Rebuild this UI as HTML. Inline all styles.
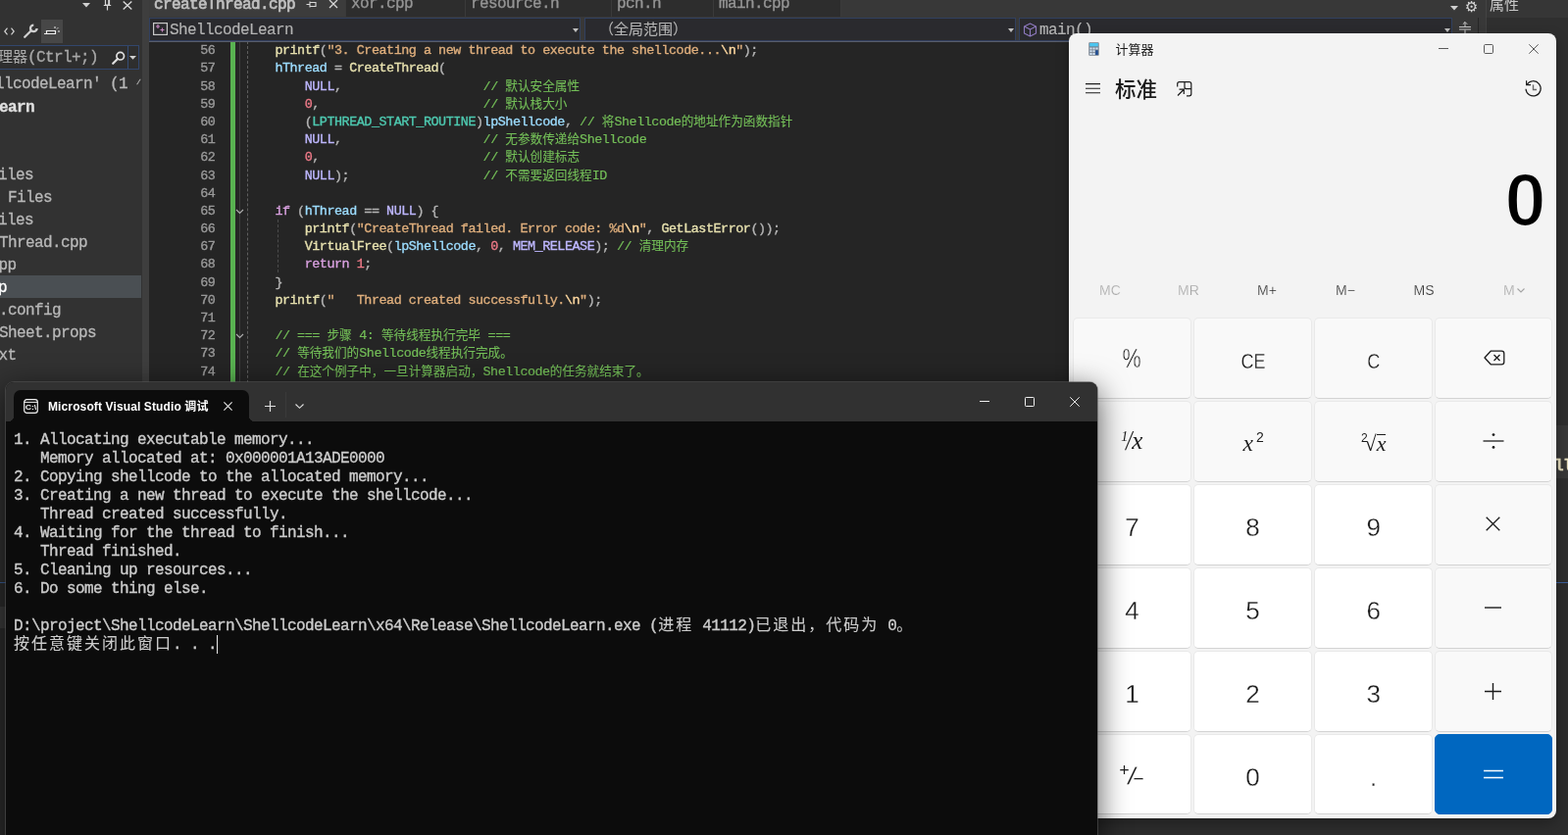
<!DOCTYPE html>
<html lang="zh-CN"><head><meta charset="utf-8"><title>ShellcodeLearn</title>
<style>
html,body{margin:0;padding:0}
body{width:1599px;height:852px;overflow:hidden;position:relative;background:#2b2b2b;
 font-family:"Liberation Sans","Noto Sans CJK SC",sans-serif;-webkit-font-smoothing:antialiased}
div,span{box-sizing:border-box}
.abs{position:absolute}
.mono{font-family:"Liberation Mono","Noto Sans CJK SC",monospace;white-space:pre;-webkit-text-stroke:.35px}
svg{position:absolute;overflow:visible}
#vs,#calc,#term{will-change:transform}
/* ---- visual studio ---- */
#vs{position:absolute;left:0;top:0;width:1599px;height:852px;background:#2b2b2b;overflow:hidden}
#side{position:absolute;left:0;top:0;width:145px;height:852px;background:#323232;overflow:hidden}
#split{position:absolute;left:145px;top:0;width:6.5px;height:852px;background:#3e3e3e}
.ui{font-family:"Liberation Mono","Noto Sans CJK SC",monospace;font-size:16px;letter-spacing:-.6px;white-space:pre;color:#c8c8c8;-webkit-text-stroke:.3px;position:absolute;line-height:23px;height:23px}
#search{position:absolute;left:-10px;top:46px;width:152px;height:25px;border:1px solid #32466c;background:#2e2e2e}
#search i{position:absolute;left:139px;top:0;width:1px;height:23px;background:#364d75}
#selrow{position:absolute;left:0;top:281px;width:144px;height:23px;background:#4a4f53}
#tabbar{position:absolute;left:152px;top:0;width:1447px;height:18px;background:#383838}
.tab{position:absolute;top:0;height:17px;background:#2d2d2d;border-right:1px solid #3a3a3a}
.tab.on{background:#3c3c3c}
.tab span{position:absolute;left:5px;top:-6.3px;line-height:23px;font-size:16px;letter-spacing:-.6px;color:#959595;margin-top:-1px}
.tab.on span{color:#c0c0c0;-webkit-text-stroke:.7px;margin-top:0}
#nav{position:absolute;left:152px;top:18px;width:1355px;height:24px;background:#383838}
.cb{position:absolute;top:0;height:23.5px;border:1px solid #31405f;background:#2a2a2e}
.cb b{position:absolute;right:1.5px;top:10px;width:0;height:0;border-left:3.5px solid transparent;border-right:3.5px solid transparent;border-top:4px solid #c0c0c0}
#editor{position:absolute;left:151.5px;top:42px;width:1355.5px;height:810px;background:#252525;overflow:hidden}
#editor>*{margin-left:.5px}
.ln{position:absolute;left:0;width:67.4px;text-align:right;color:#999;font-size:13.4px;letter-spacing:-.458px;height:18.15px;line-height:18.15px}
.cl{position:absolute;left:128.4px;color:#b4b4b4;font-size:13.4px;letter-spacing:-.458px;height:18.15px;line-height:18.15px}
.f{color:#e6e0ae}.s{color:#deae7c}.e{color:#ffd9a0}.v{color:#9cdcfe}.m{color:#beb7ff}.n{color:#ee7a88}.t{color:#4ec9b0}.k{color:#d8a0df}.c{color:#74bf58;-webkit-text-stroke:.2px}
.ui .z{font-size:15px;letter-spacing:0;-webkit-text-stroke:.1px}
.cl .z{font-size:12.64px;letter-spacing:0;-webkit-text-stroke:.1px}.p{color:#b4b4b4}.w{color:#dcdcdc}
/* ---- calculator ---- */
#calc{position:absolute;left:1090px;top:34px;width:497px;height:801px;background:#f3f3f3;border-radius:8px;overflow:hidden;color:#1b1b1b;box-shadow:0 5px 14px rgba(0,0,0,.3)}
.btn{position:absolute;width:121.2px;height:83.2px;border-radius:5px;background:#f9f9f9;border:1px solid #e9e9e9;border-bottom-color:#d3d3d3;
 text-align:center;font-size:26px;line-height:86px;color:#1c1c1c}
.btn{-webkit-text-stroke:.3px #f9f9f9}
.btn.d{background:#ffffff;-webkit-text-stroke:.3px #fff}
.btn.eq{background:#0067c0;border-color:#0067c0;color:#fff}
.mem{position:absolute;top:-2px;font-size:14px;-webkit-text-stroke:.25px #f3f3f3;width:60px;text-align:center;line-height:20px;color:#1c1c1c}
.mem.off{color:#a3a3a3}
/* ---- terminal ---- */
#term{position:absolute;left:6px;top:390px;width:1113px;height:480px;background:#0c0c0c;border-radius:8px;overflow:hidden;
 box-shadow:0 0 0 1px rgba(90,90,90,.55)}
#termshadow{position:absolute;left:6px;top:390px;width:1113px;height:480px;border-radius:8px;box-shadow:0 8px 30px 2px rgba(0,0,0,.62)}
#tbar{position:absolute;left:0;top:0;width:1113px;height:40px;background:#313131}
#ttab{position:absolute;left:8px;top:8px;width:240px;height:32px;background:#0c0c0c;border-radius:7px 7px 0 0}
#ttab:before,#ttab:after{content:"";position:absolute;bottom:0;width:6px;height:6px;background:radial-gradient(circle at 0 0,rgba(12,12,12,0) 6px,#0c0c0c 6.5px)}
#ttab:before{left:-6px}
#ttab:after{right:-6px;background:radial-gradient(circle at 100% 0,rgba(12,12,12,0) 6px,#0c0c0c 6.5px)}
#ttitle{position:absolute;left:43px;top:16px;font-size:12px;line-height:18px;font-weight:bold;color:#fff;white-space:pre;letter-spacing:.12px}
.tl{position:absolute;left:8px;color:#cccccc;font-size:16px;letter-spacing:-.6px;height:19.05px;line-height:19.05px}
.tl .z{font-family:"Liberation Mono","Noto Sans CJK SC",monospace;font-size:16px;letter-spacing:2px;line-height:0;position:relative;top:-0.5px;-webkit-text-stroke:.1px}
</style></head><body>
<div id="vs">
<div id="side">
 <svg style="left:84px;top:3px" width="8" height="5" viewBox="0 0 8 5"><path d="M0 0H8L4 4.5Z" fill="#d0d0d0"/></svg>
 <svg style="left:105px;top:-2px" width="9" height="13" viewBox="0 0 9 13"><path d="M2.5 0V7H6.5V0M0.8 7.5H8.2M4.5 7.5V12.5" fill="none" stroke="#d8d8d8" stroke-width="1.2"/><path d="M5.2 0H6.6V7H5.2Z" fill="#d8d8d8"/></svg>
 <svg style="left:125px;top:1px" width="10" height="9" viewBox="0 0 10 9"><path d="M0.7 0.5L9.3 8.5M9.3 0.5L0.7 8.5" fill="none" stroke="#d8d8d8" stroke-width="1.4"/></svg>
 <svg style="left:4px;top:28px" width="11" height="8" viewBox="0 0 11 8"><path d="M3.5 0.7L0.8 4L3.5 7.3M7.5 0.7L10.2 4L7.5 7.3" fill="none" stroke="#d0d0d0" stroke-width="1.2"/></svg>
 <svg style="left:23px;top:24px" width="16" height="16" viewBox="0 0 16 16"><path d="M2.2 13.8L8.8 7.2" stroke="#cfcfcf" stroke-width="2.3" stroke-linecap="round" fill="none"/><path d="M14.6 4.9A3.3 3.3 0 1 1 11.3 1.6" fill="none" stroke="#cfcfcf" stroke-width="2.3"/></svg>
 <div class="abs" style="left:42px;top:20px;width:22px;height:24px;background:#474747"></div>
 <svg style="left:45px;top:26px" width="17" height="10" viewBox="0 0 17 10"><path d="M0 8.5H12M2.5 8.5V5.5H11.5V8.5" fill="none" stroke="#f0f0f0" stroke-width="1.2"/><path d="M11 1V3M13 3.5L14.2 2.3M14 6H16" stroke="#f0f0f0" stroke-width="1" fill="none"/></svg>
 <div id="search"><i></i></div>
 <div class="ui" style="left:-2px;top:48px;color:#a8a8a8"><span class="z">理器</span>(Ctrl+;)</div>
 <svg style="left:114px;top:52px" width="14" height="14" viewBox="0 0 14 14"><circle cx="8.7" cy="5.2" r="3.8" fill="none" stroke="#e0e0e0" stroke-width="1.7"/><path d="M6 8L1.2 12.8" stroke="#e0e0e0" stroke-width="2.2" stroke-linecap="round"/></svg>
 <svg style="left:132px;top:57px" width="7" height="4" viewBox="0 0 7 4"><path d="M0 0H7L3.5 3.8Z" fill="#d0d0d0"/></svg>
 <div id="selrow"></div>
 <div class="ui" style="left:139px;top:72px;font-size:8px;color:#b0b0b0">/</div>
<div class="ui" style="left:-5px;top:74.7px;color:#b8b8b8;">llcodeLearn&#x27; (1 </div>
<div class="ui" style="left:-1px;top:99.1px;color:#e0e0e0;font-weight:bold;">earn</div>
<div class="ui" style="left:-2px;top:168.4px;color:#b8b8b8;">iles</div>
<div class="ui" style="left:-1px;top:191.4px;color:#b8b8b8;"> Files</div>
<div class="ui" style="left:-2px;top:214.4px;color:#b8b8b8;">iles</div>
<div class="ui" style="left:-10px;top:237.4px;color:#b8b8b8;">eThread.cpp</div>
<div class="ui" style="left:-1.5px;top:260.4px;color:#b8b8b8;">pp</div>
<div class="ui" style="left:-2px;top:283.4px;color:#ffffff;">p</div>
<div class="ui" style="left:-1px;top:306.4px;color:#b8b8b8;">.config</div>
<div class="ui" style="left:-1px;top:329.4px;color:#b8b8b8;">Sheet.props</div>
<div class="ui" style="left:-1.5px;top:352.4px;color:#b8b8b8;">xt</div>
</div>
<div id="split"></div>
<div id="tabbar">
<div class="tab on" style="left:0px;width:201px"><span class="mono">createThread.cpp</span><svg style="left:160px;top:-1px" width="12" height="10" viewBox="0 0 12 10"><path d="M0.5 5.5H4M4 2.5V8.5M4 3.5H10V7.5H4" fill="none" stroke="#d8d8d8" stroke-width="1.1"/></svg><svg style="left:183px;top:-1px" width="10" height="10" viewBox="0 0 10 10"><path d="M1 1L9 9M9 1L1 9" fill="none" stroke="#d8d8d8" stroke-width="1.3"/></svg></div>
<div class="tab" style="left:201px;width:122px"><span class="mono">xor.cpp</span></div>
<div class="tab" style="left:323px;width:149px"><span class="mono">resource.h</span></div>
<div class="tab" style="left:472px;width:104px"><span class="mono">pch.h</span></div>
<div class="tab" style="left:576px;width:130px"><span class="mono">main.cpp</span></div>
 <svg style="left:1327px;top:6px" width="8" height="5" viewBox="0 0 8 5"><path d="M0 0H8L4 4.5Z" fill="#d0d0d0"/></svg>
 <div class="abs" style="left:1342px;top:-5px;font-size:15px;line-height:23px;color:#d8d8d8;font-family:'Liberation Sans','DejaVu Sans',sans-serif">⚙</div>
 <div class="abs" style="left:1362.5px;top:0;width:85px;height:18px;background:#363636;border-left:1px solid #444"></div>
 <div class="abs" style="left:1367px;top:-7.3px;font-size:15px;line-height:23px;color:#c8c8c8;font-family:'Liberation Sans','Noto Sans CJK SC',sans-serif">属性</div>
</div>
<div id="nav">
 <div class="cb" style="left:0;width:440px"><b></b>
  <svg style="left:3px;top:4px" width="15" height="13" viewBox="0 0 15 13"><rect x="0.6" y="0.6" width="13.8" height="11.8" fill="none" stroke="#c8c8c8" stroke-width="1.2"/><path d="M3 4H7M5 2V6M7.5 7.5H11.5M9.5 5.5V9.5" stroke="#c586c0" stroke-width="1.2" fill="none"/></svg>
  <div class="ui" style="left:20px;top:1.5px;line-height:21px;height:21px;color:#b4b4b4;-webkit-text-stroke:.15px">ShellcodeLearn</div></div>
 <div class="cb" style="left:444px;width:440px"><b></b>
  <div class="ui" style="left:14px;top:1.5px;line-height:21px;height:21px;color:#b4b4b4;-webkit-text-stroke:.15px"><span class="z">（全局范围）</span></div></div>
 <div class="cb" style="left:887px;width:442px"><b></b>
  <svg style="left:3px;top:3.5px" width="15" height="15" viewBox="0 0 15 15"><path d="M7.5 1L13.5 4V11L7.5 14L1.5 11V4ZM1.5 4L7.5 7L13.5 4M7.5 7V14" fill="none" stroke="#8f7abf" stroke-width="1.1" stroke-linejoin="round"/></svg>
  <div class="ui" style="left:20px;top:1.5px;line-height:21px;height:21px;color:#b4b4b4;-webkit-text-stroke:.15px">main()</div></div>
 <svg style="left:1335.5px;top:3.5px" width="12" height="18" viewBox="0 0 12 18"><path d="M0 5.5H12M0 8H12M6 0.5V5M6 8.5V13M3.8 2.7L6 0.5L8.2 2.7" fill="none" stroke="#c8c8c8" stroke-width="1"/></svg>
</div>
<div id="editor">
 <div class="abs" style="left:83.2px;top:0;width:4.6px;height:810px;background:#59b251"></div>
 <div class="abs" style="left:91.5px;top:0;width:1px;height:810px;background:#3c3c3c"></div>
 <div class="abs" style="left:100px;top:0;width:0;height:810px;border-left:1px dashed #5e5e5e"></div>
 <div class="abs" style="left:131px;top:182px;width:0;height:54px;border-left:1px dashed #4c4c4c"></div>
 <svg style="left:88px;top:170.5px" width="9" height="6" viewBox="0 0 9 6"><path d="M1 1L4.5 4.5L8 1" fill="none" stroke="#b0b0b0" stroke-width="1.1"/></svg>
 <svg style="left:88px;top:297.5px" width="9" height="6" viewBox="0 0 9 6"><path d="M1 1L4.5 4.5L8 1" fill="none" stroke="#b0b0b0" stroke-width="1.1"/></svg>
<div class="ln mono" style="top:1.30px">56</div>
<div class="cl mono" style="top:1.30px"><span class="f">printf</span><span class="p">(</span><span class="s">&quot;3. Creating a new thread to execute the shellcode...</span><span class="e">\n</span><span class="s">&quot;</span><span class="p">);</span></div>
<div class="ln mono" style="top:19.48px">57</div>
<div class="cl mono" style="top:19.48px"><span class="v">hThread</span><span class="p"> = </span><span class="f">CreateThread</span><span class="p">(</span></div>
<div class="ln mono" style="top:37.66px">58</div>
<div class="cl mono" style="top:37.66px">    <span class="m">NULL</span><span class="p">,</span>                   <span class="c">// <span class="z">默认安全属性</span></span></div>
<div class="ln mono" style="top:55.84px">59</div>
<div class="cl mono" style="top:55.84px">    <span class="n">0</span><span class="p">,</span>                      <span class="c">// <span class="z">默认栈大小</span></span></div>
<div class="ln mono" style="top:74.02px">60</div>
<div class="cl mono" style="top:74.02px">    <span class="p">(</span><span class="t">LPTHREAD_START_ROUTINE</span><span class="p">)</span><span class="v">lpShellcode</span><span class="p">, </span><span class="c">// <span class="z">将</span>Shellcode<span class="z">的地址作为函数指针</span></span></div>
<div class="ln mono" style="top:92.20px">61</div>
<div class="cl mono" style="top:92.20px">    <span class="m">NULL</span><span class="p">,</span>                   <span class="c">// <span class="z">无参数传递给</span>Shellcode</span></div>
<div class="ln mono" style="top:110.38px">62</div>
<div class="cl mono" style="top:110.38px">    <span class="n">0</span><span class="p">,</span>                      <span class="c">// <span class="z">默认创建标志</span></span></div>
<div class="ln mono" style="top:128.56px">63</div>
<div class="cl mono" style="top:128.56px">    <span class="m">NULL</span><span class="p">);</span>                  <span class="c">// <span class="z">不需要返回线程</span>ID</span></div>
<div class="ln mono" style="top:146.74px">64</div>
<div class="ln mono" style="top:164.92px">65</div>
<div class="cl mono" style="top:164.92px"><span class="k">if</span><span class="p"> (</span><span class="v">hThread</span><span class="p"> == </span><span class="m">NULL</span><span class="p">) {</span></div>
<div class="ln mono" style="top:183.10px">66</div>
<div class="cl mono" style="top:183.10px">    <span class="f">printf</span><span class="p">(</span><span class="s">&quot;CreateThread failed. Error code: %d</span><span class="e">\n</span><span class="s">&quot;</span><span class="p">, </span><span class="f">GetLastError</span><span class="p">());</span></div>
<div class="ln mono" style="top:201.28px">67</div>
<div class="cl mono" style="top:201.28px">    <span class="f">VirtualFree</span><span class="p">(</span><span class="v">lpShellcode</span><span class="p">, </span><span class="n">0</span><span class="p">, </span><span class="m">MEM_RELEASE</span><span class="p">); </span><span class="c">// <span class="z">清理内存</span></span></div>
<div class="ln mono" style="top:219.46px">68</div>
<div class="cl mono" style="top:219.46px">    <span class="k">return</span> <span class="n">1</span><span class="p">;</span></div>
<div class="ln mono" style="top:237.64px">69</div>
<div class="cl mono" style="top:237.64px"><span class="p">}</span></div>
<div class="ln mono" style="top:255.82px">70</div>
<div class="cl mono" style="top:255.82px"><span class="f">printf</span><span class="p">(</span><span class="s">&quot;   Thread created successfully.</span><span class="e">\n</span><span class="s">&quot;</span><span class="p">);</span></div>
<div class="ln mono" style="top:274.00px">71</div>
<div class="ln mono" style="top:292.18px">72</div>
<div class="cl mono" style="top:292.18px"><span class="c">// === <span class="z">步骤</span> 4: <span class="z">等待线程执行完毕</span> ===</span></div>
<div class="ln mono" style="top:310.36px">73</div>
<div class="cl mono" style="top:310.36px"><span class="c">// <span class="z">等待我们的</span>Shellcode<span class="z">线程执行完成。</span></span></div>
<div class="ln mono" style="top:328.54px">74</div>
<div class="cl mono" style="top:328.54px"><span class="c">// <span class="z">在这个例子中，一旦计算器启动，</span>Shellcode<span class="z">的任务就结束了。</span></span></div>
</div>
<div class="abs" style="left:152px;top:40.6px;width:1329px;height:2.5px;background:linear-gradient(#33405f 0,#33405f 30%,#585d6a 36%,#585d6a 100%)"></div>
<div class="abs" style="left:1507px;top:18px;width:92px;height:834px;background:#383838"></div>
<div class="abs" style="left:1514.5px;top:18px;width:85px;height:834px;background:#2f2f2f;border-left:1px solid #404040"></div>
<div class="abs" style="left:1507px;top:18px;width:1px;height:24px;background:#262626"></div>
<div class="abs" style="left:1587px;top:434px;width:12px;height:54px;background:#383838"></div>
<div class="ui" style="left:1585px;top:465px;color:#e8e0c0;font-weight:bold">ll</div>
<div class="abs" style="left:0;top:594px;width:1599px;height:258px;background:#2d2d2d;border-top:1px solid #3b5f9a"></div>
<div class="abs" style="left:0;top:619px;width:6px;height:22px;background:#3d3d3d"></div>
</div>

<div id="calc">
 <svg style="left:20.2px;top:9px" width="11" height="14" viewBox="0 0 11 14"><rect x="0.3" y="0.2" width="10.4" height="13.6" rx="0.8" fill="#727d8a"/><rect x="1.2" y="1" width="8.6" height="3.4" fill="#4cc6f0"/><path d="M1.4 5.6H3.6V7.5H1.4ZM4.4 5.6H6.6V7.5H4.4ZM7.4 5.6H9.6V7.5H7.4ZM1.4 8.3H3.6V10.2H1.4ZM4.4 8.3H6.6V10.2H4.4ZM1.4 11H3.6V12.9H1.4ZM4.4 11H6.6V12.9H4.4Z" fill="#d3e3f4"/><rect x="7.3" y="8.3" width="2.4" height="4.7" fill="#1b4a94"/></svg>
 <div class="abs" style="left:47.5px;top:7px;font-size:13px;line-height:20px;color:#1b1b1b">计算器</div>
 <svg style="left:377px;top:15px" width="10" height="1" viewBox="0 0 10 1"><path d="M0 0.5H10" stroke="#5a5a5a" stroke-width="1"/></svg>
 <svg style="left:423px;top:10.5px" width="10" height="10" viewBox="0 0 10 10"><rect x="0.5" y="0.5" width="9" height="9" rx="1.2" fill="none" stroke="#5a5a5a" stroke-width="1"/></svg>
 <svg style="left:469px;top:10.5px" width="10" height="10" viewBox="0 0 10 10"><path d="M0.3 0.3L9.7 9.7M9.7 0.3L0.3 9.7" stroke="#5a5a5a" stroke-width="1"/></svg>
 <svg style="left:16.6px;top:51px" width="15" height="11" viewBox="0 0 15 11"><path d="M0 0.6H15M0 5.2H15M0 9.8H15" stroke="#1c1c1c" stroke-width="1.1"/></svg>
 <div class="abs" style="left:47px;top:43px;font-size:21.5px;line-height:30px;font-weight:500;color:#1b1b1b">标准</div>
 <svg style="left:110px;top:48.5px" width="16" height="16" viewBox="0 0 16 16"><path d="M0.7 5.5V2.7Q0.7 0.7 2.7 0.7H12.8Q14.8 0.7 14.8 2.7V12.8Q14.8 14.8 12.8 14.8H10M8 0.7V5.7Q8 7.7 10 7.7H14.8M1 14.5L7 8.5M2.5 8.2H7.3V13" fill="none" stroke="#1c1c1c" stroke-width="1.2"/></svg>
 <svg style="left:464px;top:46.5px" width="19" height="19" viewBox="0 0 19 19"><path d="M3.2 5.2A7.6 7.6 0 1 1 2 9.8" fill="none" stroke="#1c1c1c" stroke-width="1.2"/><path d="M2.6 1.2V5.6H7" fill="none" stroke="#1c1c1c" stroke-width="1.2"/><path d="M9.5 5.5V10.5H13" fill="none" stroke="#6a6a6a" stroke-width="1.4"/></svg>
 <div class="abs" style="left:378.4px;top:127.5px;width:108px;text-align:right;font-size:75.5px;line-height:84px;font-weight:bold;color:#000;-webkit-text-stroke:2px #f3f3f3">0</div>
<div class="mem off" style="left:12.0px;top:252.0px">MC</div>
<div class="mem off" style="left:92.0px;top:252.0px">MR</div>
<div class="mem" style="left:172.0px;top:252.0px">M+</div>
<div class="mem" style="left:252.0px;top:252.0px">M−</div>
<div class="mem" style="left:332.0px;top:252.0px">MS</div>
<div class="mem off" style="left:443.0px;top:252.0px;width:24px;text-align:left">M<svg style="left:14px;top:8px" width="8" height="5" viewBox="0 0 8 5"><path d="M0.5 0.5L4 4L7.5 0.5" fill="none" stroke="#a3a3a3" stroke-width="1.1"/></svg></div>
<div class="btn" style="left:3.8px;top:290.1px"><span style="display:inline-block;font-size:27px;transform:scaleX(.8);position:relative;top:-2px;-webkit-text-stroke:.45px #f9f9f9">%</span></div>
<div class="btn" style="left:127.0px;top:290.1px"><span style="display:inline-block;font-size:21.5px;transform:scaleX(.84);position:relative;top:-1px">CE</span></div>
<div class="btn" style="left:250.1px;top:290.1px"><span style="display:inline-block;font-size:21.5px;transform:scaleX(.84);position:relative;top:-1px">C</span></div>
<div class="btn" style="left:373.2px;top:290.1px;width:120.2px"><svg style="left:48.5px;top:31.8px" width="22" height="16" viewBox="0 0 22 16"><path d="M7.2 1.2H18.2Q20.8 1.2 20.8 3.8V12.2Q20.8 14.8 18.2 14.8H7.2L1 8Z" fill="none" stroke="#1c1c1c" stroke-width="1.3" stroke-linejoin="round"/><path d="M10.5 5L16.5 11M16.5 5L10.5 11" stroke="#1c1c1c" stroke-width="1.3" fill="none"/></svg></div>
<div class="btn" style="left:3.8px;top:375.1px"><span style="font-family:'Liberation Serif',serif;font-size:25px;position:relative;top:-4.5px;left:-1px;-webkit-text-stroke:0"><i style="font-size:14px;position:relative;top:-8px;left:2px">1</i><span style="display:inline-block;transform:scaleY(1.15) skewX(-8deg)">/</span><i style="margin-left:-1px">x</i></span></div>
<div class="btn" style="left:127.0px;top:375.1px"><span style="font-family:'Liberation Serif',serif;font-size:23.5px;position:relative;top:-2px;left:-1px;-webkit-text-stroke:0"><i>x</i><span style="font-family:'Liberation Sans',sans-serif;font-size:14px;position:relative;top:-9px;left:3px">2</span></span></div>
<div class="btn" style="left:250.1px;top:375.1px"><span style="font-family:'Liberation Serif',serif;font-size:22px;position:relative;top:-2.5px;left:-1.5px;-webkit-text-stroke:0"><span style="font-family:'Liberation Sans',sans-serif;font-size:12px;position:relative;top:-9px;left:3px">2</span>√<i style="border-top:1.3px solid #1c1c1c;line-height:18px;display:inline-block;height:18px;position:relative;top:0.5px">x</i></span></div>
<div class="btn" style="left:373.2px;top:375.1px;width:120.2px"><svg style="left:47.5px;top:30.6px" width="22" height="18" viewBox="0 0 22 18"><path d="M0.5 9H21.5" stroke="#1c1c1c" stroke-width="1.3"/><circle cx="11" cy="2.6" r="1.4" fill="#1c1c1c"/><circle cx="11" cy="15.4" r="1.4" fill="#1c1c1c"/></svg></div>
<div class="btn d" style="left:3.8px;top:460.0px">7</div>
<div class="btn d" style="left:127.0px;top:460.0px">8</div>
<div class="btn d" style="left:250.1px;top:460.0px">9</div>
<div class="btn" style="left:373.2px;top:460.0px;width:120.2px"><svg style="left:50.5px;top:32.2px" width="15" height="15" viewBox="0 0 15 15"><path d="M0.7 0.7L14.3 14.3M14.3 0.7L0.7 14.3" stroke="#1c1c1c" stroke-width="1.3"/></svg></div>
<div class="btn d" style="left:3.8px;top:544.9px">4</div>
<div class="btn d" style="left:127.0px;top:544.9px">5</div>
<div class="btn d" style="left:250.1px;top:544.9px">6</div>
<div class="btn" style="left:373.2px;top:544.9px;width:120.2px"><svg style="left:50px;top:39.5px" width="17" height="2" viewBox="0 0 17 2"><path d="M0 1H17" stroke="#1c1c1c" stroke-width="1.4"/></svg></div>
<div class="btn d" style="left:3.8px;top:629.9px">1</div>
<div class="btn d" style="left:127.0px;top:629.9px">2</div>
<div class="btn d" style="left:250.1px;top:629.9px">3</div>
<div class="btn" style="left:373.2px;top:629.9px;width:120.2px"><svg style="left:49.5px;top:32px" width="17" height="17" viewBox="0 0 17 17"><path d="M0 8.5H17M8.5 0V17" stroke="#1c1c1c" stroke-width="1.4"/></svg></div>
<div class="btn d" style="left:3.8px;top:714.8px;height:82px"><span style="font-size:24px;position:relative;top:-1.5px;left:0px;-webkit-text-stroke:.1px #fff"><span style="position:relative;top:-8.5px;left:1px;font-size:18px">+</span><span style="display:inline-block;transform:skewX(-12deg)">/</span><span style="position:relative;top:0.5px;left:-2px;font-size:19px">−</span></span></div>
<div class="btn d" style="left:127.0px;top:714.8px;height:82px">0</div>
<div class="btn d" style="left:250.1px;top:714.8px;height:82px">.</div>
<div class="btn eq" style="left:373.2px;top:714.8px;height:82px;width:120.2px"><svg style="left:49px;top:35.7px" width="20" height="10" viewBox="0 0 20 10"><path d="M0 1.5H20M0 8.5H20" stroke="#fff" stroke-width="1.6"/></svg></div>
</div>

<div id="termshadow"></div>
<div id="term">
 <div id="tbar">
  <div id="ttab">
   <svg style="left:10px;top:9px" width="15" height="15" viewBox="0 0 15 15"><rect x="0.7" y="0.7" width="13.6" height="13.6" rx="2.6" fill="none" stroke="#f0f0f0" stroke-width="1.2"/><path d="M0.7 3.4H14.3" stroke="#f0f0f0" stroke-width="1"/><text x="1.7" y="11.4" font-family="Liberation Sans,sans-serif" font-size="7" font-weight="bold" fill="#f0f0f0" textLength="11.6" lengthAdjust="spacingAndGlyphs">C:\</text></svg>
   <svg style="left:214px;top:11.5px" width="9" height="9" viewBox="0 0 9 9"><path d="M0.4 0.4L8.6 8.6M8.6 0.4L0.4 8.6" stroke="#e8e8e8" stroke-width="1.1"/></svg>
  </div>
  <div id="ttitle">Microsoft Visual Studio <span style="font-family:'Liberation Sans','Noto Sans CJK SC',sans-serif">调试</span></div>
  <svg style="left:264px;top:19px" width="11" height="11" viewBox="0 0 11 11"><path d="M0 5.5H11M5.5 0V11" stroke="#e0e0e0" stroke-width="1.2"/></svg>
  <div class="abs" style="left:285px;top:10px;width:1px;height:26px;background:#3a3a3a"></div>
  <svg style="left:295px;top:22px" width="9" height="5" viewBox="0 0 9 5"><path d="M0.5 0.5L4.5 4.3L8.5 0.5" fill="none" stroke="#e0e0e0" stroke-width="1.1"/></svg>
  <svg style="left:993px;top:19.2px" width="10" height="1" viewBox="0 0 10 1"><path d="M0 0.5H10" stroke="#f0f0f0" stroke-width="1"/></svg>
  <svg style="left:1039px;top:15px" width="10" height="10" viewBox="0 0 10 10"><rect x="0.5" y="0.5" width="9" height="9" rx="0.8" fill="none" stroke="#f0f0f0" stroke-width="1"/></svg>
  <svg style="left:1085px;top:15px" width="10" height="10" viewBox="0 0 10 10"><path d="M0.3 0.3L9.7 9.7M9.7 0.3L0.3 9.7" stroke="#f0f0f0" stroke-width="1"/></svg>
 </div>
<div class="tl mono" style="top:49.90px">1. Allocating executable memory...</div>
<div class="tl mono" style="top:68.95px">   Memory allocated at: 0x000001A13ADE0000</div>
<div class="tl mono" style="top:88.00px">2. Copying shellcode to the allocated memory...</div>
<div class="tl mono" style="top:107.05px">3. Creating a new thread to execute the shellcode...</div>
<div class="tl mono" style="top:126.10px">   Thread created successfully.</div>
<div class="tl mono" style="top:145.15px">4. Waiting for the thread to finish...</div>
<div class="tl mono" style="top:164.20px">   Thread finished.</div>
<div class="tl mono" style="top:183.25px">5. Cleaning up resources...</div>
<div class="tl mono" style="top:202.30px">6. Do some thing else.</div>
<div class="tl mono" style="top:240.40px">D:\project\ShellcodeLearn\ShellcodeLearn\x64\Release\ShellcodeLearn.exe (<span class="z">进程</span> 41112)<span class="z">已退出，代码为</span> 0<span class="z">。</span></div>
<div class="tl mono" style="top:259.45px"><span class="z">按任意键关闭此窗口</span>. . .<span style="position:relative"><span style="position:absolute;left:0;top:-1.5px;width:1px;height:19px;background:#e8e8e8"></span></span></div>
</div>
</body></html>
